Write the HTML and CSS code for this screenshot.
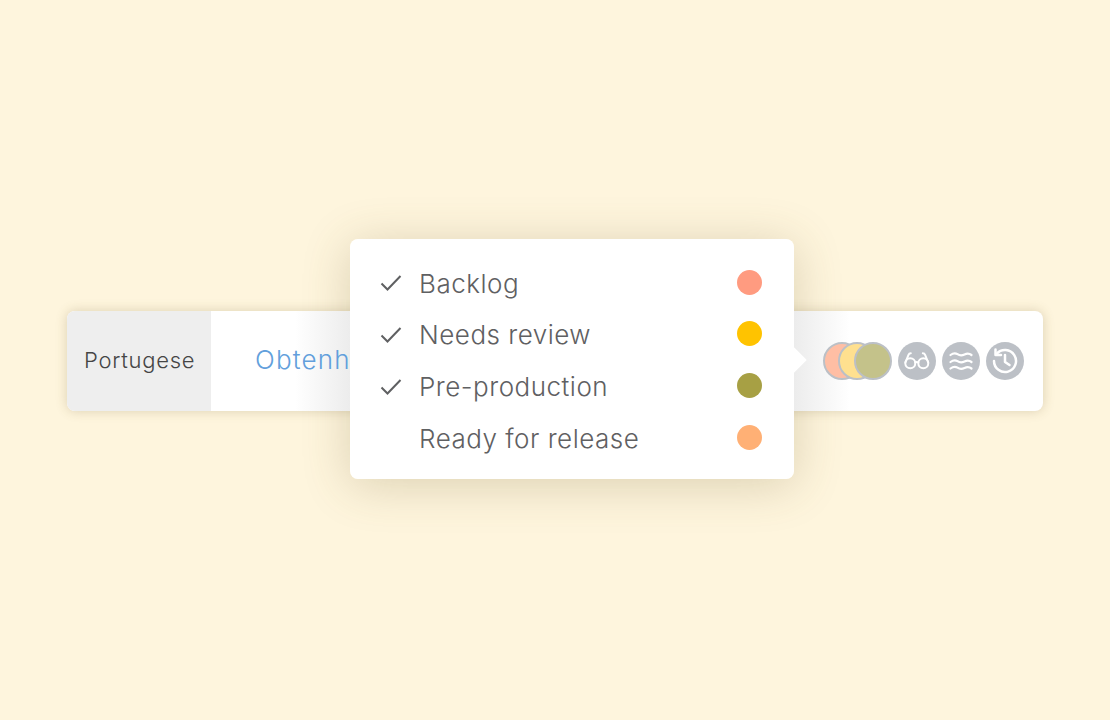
FILE: index.html
```
<!DOCTYPE html>
<html lang="en">
<head>
<meta charset="utf-8">
<title>Status menu</title>
<link rel="stylesheet" href="styles.css">
</head>
<body>
<main class="stage">
  <div class="popup-shadow"></div>
  <section class="card">
    <div class="lang">Portugese</div>
    <div class="fade fade-left"></div>
    <div class="fade fade-right"></div>
    <div class="source">Obtenha</div>
    <div class="tools">
      <div class="stack">
        <span class="dot dot-a"></span>
        <span class="dot dot-b"></span>
        <span class="dot dot-c"></span>
      </div>
      <span class="tool">
        <svg viewBox="0 0 38 38" width="38" height="38" fill="none" stroke="#fff" stroke-width="2" stroke-linecap="round" stroke-linejoin="round"><circle cx="12.300" cy="21.300" r="5"/><circle cx="25.300" cy="21.300" r="5"/><path d="M17.300 20.500c1-.6 2-.6 3 0"/><path d="M7.400 20.500 10.500 12.800c.4-1 1-1.500 2.300-1.500"/><path d="M30.200 20.500 27.100 12.800c-.4-1-1-1.500-2.300-1.500"/></svg>
      </span>
      <span class="tool">
        <svg viewBox="0 0 38 38" width="38" height="38" fill="none" stroke="#fff" stroke-width="2.200" stroke-linecap="round"><path d="M8.500 13c2.600-2 5.200-2 7-.8s3.800 1.800 7 .3 5-1 7 .5"/><path d="M8.500 20c2.600-2 5.200-2 7-.8s3.800 1.800 7 .3 5-1 7 .5"/><path d="M8.500 26.500c2.600-2 5.200-2 7-.8s3.800 1.800 7 .3 5-1 7 .5"/></svg>
      </span>
      <span class="tool">
        <svg viewBox="0 0 38 38" width="38" height="38" fill="none" stroke="#fff" stroke-width="2.500" stroke-linecap="round" stroke-linejoin="round"><path d="M10.700 11.800A11 11 0 1 1 8 19"/><path d="M9.500 7.500v5.500h5.500"/><path d="M19 13v7l4.500 3"/></svg>
      </span>
    </div>
  </section>
  <section class="popup">
    <ul class="list">
      <li class="row">
        <svg class="check" viewBox="0 0 22 18" width="22" height="18" fill="none" stroke="#5f6062" stroke-width="2"><path d="M1.500 9.500 7.500 15.500 20.500 2"/></svg>
        <span class="label">Backlog</span><span class="swatch swatch-1"></span>
      </li>
      <li class="row">
        <svg class="check" viewBox="0 0 22 18" width="22" height="18" fill="none" stroke="#5f6062" stroke-width="2"><path d="M1.500 9.500 7.500 15.500 20.500 2"/></svg>
        <span class="label">Needs review</span><span class="swatch swatch-2"></span>
      </li>
      <li class="row">
        <svg class="check" viewBox="0 0 22 18" width="22" height="18" fill="none" stroke="#5f6062" stroke-width="2"><path d="M1.500 9.500 7.500 15.500 20.500 2"/></svg>
        <span class="label">Pre-production</span><span class="swatch swatch-3"></span>
      </li>
      <li class="row">
        <span class="check"></span>
        <span class="label">Ready for release</span><span class="swatch swatch-4"></span>
      </li>
    </ul>
  </section>
</main>
</body>
</html>
```
FILE: styles.css
```
* { box-sizing: border-box; }
html, body { margin: 0; height: 100%; }
body {
  background: #fef5dd;
  font-family: Inter, "Liberation Sans", sans-serif;
  overflow: hidden;
}
.stage {
  position: relative;
  width: 1110px;
  height: 720px;
  padding: 311px 67px 0;
}
.popup-shadow {
  position: absolute;
  left: 350px;
  top: 239px;
  width: 444px;
  height: 240px;
  border-radius: 8px;
  box-shadow: 0 6px 48px rgba(110, 90, 40, .24);
}
.card {
  position: relative;
  display: flex;
  width: 976px;
  height: 100px;
  border-radius: 8px;
  background: #fff;
  box-shadow: 0 0 12px rgba(110, 90, 40, .24);
  overflow: hidden;
}
.lang {
  display: flex;
  align-items: center;
  width: 144px;
  padding-left: 17px;
  padding-bottom: 3px;
  background: #eeeeee;
  color: #454545;
  font-size: 22px;
  font-weight: 350;
  letter-spacing: .75px;
}
.source {
  position: relative;
  padding: 32px 0 0 44px;
  color: #629fdc;
  font-size: 26px;
  font-weight: 350;
  line-height: 34px;
  letter-spacing: 1.2px;
}
.fade {
  position: absolute;
  top: 0;
  bottom: 0;
  width: 56px;
}
.fade-left {
  left: 228px;
  background: linear-gradient(to right, rgba(236, 236, 236, 0), #ececec);
}
.fade-right {
  left: 727px;
  background: linear-gradient(to left, rgba(236, 236, 236, 0), #ececec);
}
.fade-right::after {
  content: "";
  position: absolute;
  left: -9px;
  top: 40px;
  width: 18px;
  height: 18px;
  background: #fff;
  transform: rotate(45deg);
}
.tools {
  position: absolute;
  left: 756px;
  top: 31px;
  display: flex;
  gap: 6px;
}
.stack {
  position: relative;
  width: 69px;
  height: 38px;
}
.dot {
  position: absolute;
  top: 0;
  width: 38px;
  height: 38px;
  border: 2px solid #bcc0c6;
  border-radius: 50%;
}
.dot-a { left: 0; background: #ffbea4; }
.dot-b { left: 15px; background: #ffe08f; }
.dot-c { left: 31px; background: #c4c28a; }
.tool {
  display: block;
  width: 38px;
  height: 38px;
  border-radius: 50%;
  background: #bcc0c6;
}
.tool svg { display: block; }
.popup {
  position: absolute;
  left: 350px;
  top: 239px;
  width: 444px;
  height: 240px;
  border-radius: 8px;
  background: #fff;
}
.list {
  display: flex;
  flex-direction: column;
  margin: 0;
  padding: 18.5px 32px 0 30px;
  list-style: none;
}
.row {
  display: flex;
  align-items: center;
  height: 51.67px;
  color: #5f6062;
  font-size: 26px;
  font-weight: 350;
  letter-spacing: .5px;
}
.check {
  display: block;
  flex: none;
  width: 22px;
  height: 18px;
  margin-right: 17px;
}
.label { flex: 1; }
.swatch {
  flex: none;
  width: 25px;
  height: 25px;
  margin-bottom: 2px;
  border-radius: 50%;
}
.swatch-1 { background: #ff9b80; }
.swatch-2 { background: #ffc300; }
.swatch-3 { background: #a7a044; }
.swatch-4 { background: #ffb075; }
```
